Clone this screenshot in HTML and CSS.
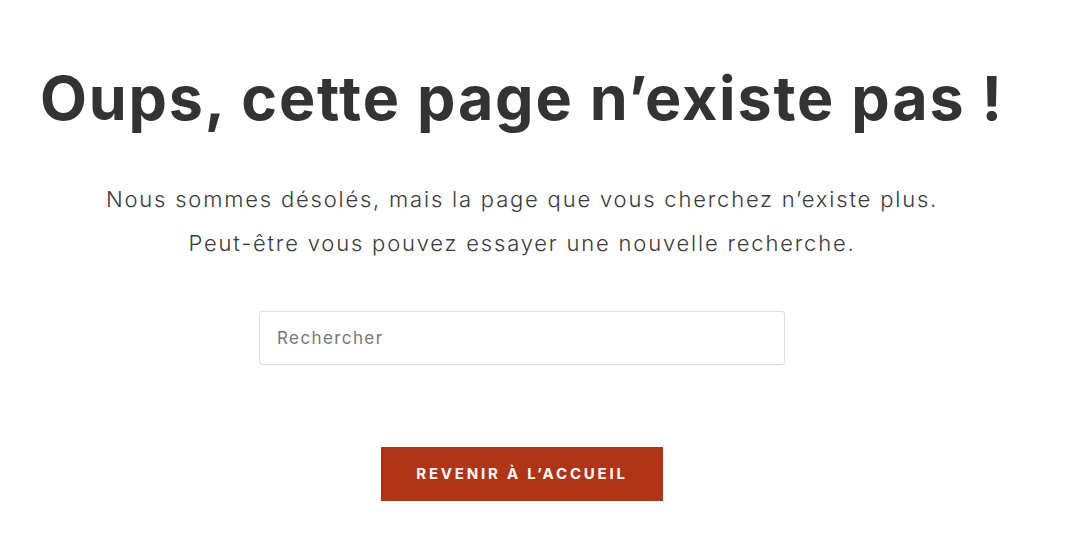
FILE: index.html
```html
<!DOCTYPE html>
<html lang="fr">
<head>
  <meta charset="utf-8">
  <title>Page introuvable</title>
  <link rel="stylesheet" href="styles.css">
</head>
<body>
  <main class="error-page">
    <h1 class="error-title">Oups, cette page n’existe pas !</h1>

    <p class="error-text">
      Nous sommes désolés, mais la page que vous cherchez n’existe plus.<br>
      Peut-être vous pouvez essayer une nouvelle recherche.
    </p>

    <form class="search-form" action="#">
      <input type="search" class="search-field" placeholder="Rechercher">
    </form>

    <a class="home-button" href="#">Revenir à l’accueil</a>
  </main>
</body>
</html>
```

FILE: styles.css
```css
body {
  margin: 0;
  background-color: #ffffff;
  color: #333333;
  font-family: Inter, "Open Sans", sans-serif;
}

.error-page {
  width: 1044px;
  display: flex;
  flex-direction: column;
  align-items: center;
  padding-top: 62px;
}

.error-title {
  margin: 0;
  font-size: 61px;
  font-weight: 700;
  line-height: 1.2;
  letter-spacing: 1.8px;
  color: #333333;
}

.error-text {
  margin: 42px 0 0;
  font-size: 22px;
  font-weight: 300;
  line-height: 44px;
  letter-spacing: 1.8px;
  text-align: center;
  color: #3a3a3a;
}

.search-form {
  margin-top: 46px;
}

.search-field {
  box-sizing: border-box;
  width: 526px;
  height: 54px;
  padding: 0 17px;
  border: 1px solid #dddddd;
  border-radius: 3px;
  font-family: Inter, sans-serif;
  font-size: 17px;
  letter-spacing: 1.4px;
  color: #333333;
  outline: none;
}

.search-field::placeholder {
  color: #777777;
}

.home-button {
  margin-top: 82px;
  display: block;
  width: 282px;
  height: 54px;
  line-height: 54px;
  text-align: center;
  background-color: #b03516;
  color: #ffffff;
  font-size: 15px;
  font-weight: 700;
  letter-spacing: 2.8px;
  text-transform: uppercase;
  text-decoration: none;
}
```
